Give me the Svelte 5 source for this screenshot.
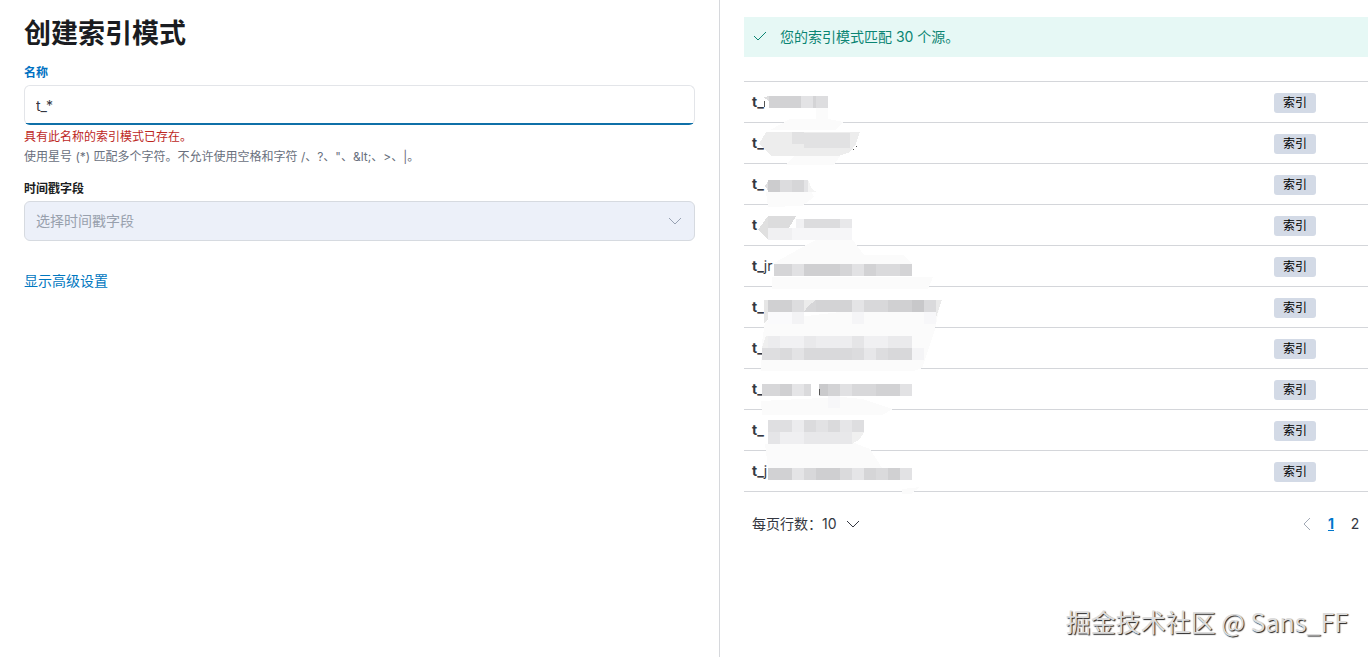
<script lang="ts">
	interface Source {
		match: string;
		rest?: string;
	}

	// x, y, width, height, grey level
	type Block = [number, number, number, number, number];

	const sources: Source[] = [
		{ match: 't_' },
		{ match: 't_' },
		{ match: 't_' },
		{ match: 't' },
		{ match: 't_', rest: 'jr' },
		{ match: 't_' },
		{ match: 't_' },
		{ match: 't_' },
		{ match: 't_' },
		{ match: 't_', rest: 'j' }
	];

	// near-white strokes that run over the row borders
	const smears = [
		'46,38 72,38 72,27 84,27 84,38 99,41 92,49 26,49',
		'50,75 96,75 90,84 42,84',
		'22,111 66,108 70,116 58,125 24,126',
		'66,162 78,156 108,158 120,174 160,174 168,183 28,183',
		'28,196 189,196 184,208 28,208',
		'21,240 197,219 191,249 178,287 170,290 17,290 18,262',
		'17,320 98,316 118,318 149,328 138,334 18,334',
		'21,363 66,363 92,355 126,368 138,387 24,387',
		'158,408 176,406 167,413 158,413'
	];

	const blocks: Block[] = [
		[25, 15, 23, 12, 210],
		[48, 15, 12, 12, 210],
		[57, 15, 12, 12, 227],
		[69, 15, 12, 12, 212],
		[72, 15, 12, 12, 221],
		[24, 99, 12, 12, 204],
		[36, 99, 12, 12, 220],
		[48, 99, 12, 12, 214],
		[60, 99, 4, 12, 228],
		[52, 138, 8, 9, 241],
		[60, 138, 36, 9, 220],
		[96, 138, 12, 9, 232],
		[24, 147, 24, 12, 240],
		[48, 147, 60, 12, 246],
		[30, 183, 18, 12, 213],
		[48, 183, 12, 12, 225],
		[60, 183, 36, 12, 207],
		[96, 183, 12, 12, 213],
		[108, 183, 12, 12, 226],
		[120, 183, 12, 12, 210],
		[132, 183, 24, 12, 218],
		[156, 183, 12, 12, 212],
		[24, 219, 24, 12, 208],
		[48, 219, 12, 12, 221],
		[72, 219, 36, 12, 211],
		[108, 219, 12, 12, 228],
		[120, 219, 24, 12, 216],
		[144, 219, 24, 12, 208],
		[168, 219, 12, 12, 200],
		[180, 219, 12, 12, 218],
		[24, 231, 24, 12, 250],
		[48, 231, 12, 12, 243],
		[108, 231, 12, 12, 245],
		[180, 231, 12, 12, 247],
		[24, 255, 12, 12, 236],
		[36, 255, 24, 12, 241],
		[60, 255, 12, 12, 233],
		[72, 255, 36, 12, 237],
		[108, 255, 12, 12, 229],
		[120, 255, 24, 12, 240],
		[144, 255, 24, 12, 234],
		[18, 267, 18, 12, 222],
		[36, 267, 12, 12, 218],
		[48, 267, 12, 12, 227],
		[60, 267, 48, 12, 217],
		[108, 267, 12, 12, 220],
		[120, 267, 12, 12, 231],
		[132, 267, 12, 12, 221],
		[144, 267, 24, 12, 216],
		[168, 267, 12, 12, 244],
		[18, 303, 18, 12, 215],
		[36, 303, 12, 12, 208],
		[48, 303, 12, 12, 229],
		[60, 303, 7, 12, 218],
		[75, 303, 9, 12, 202],
		[84, 303, 12, 12, 211],
		[96, 303, 12, 12, 225],
		[108, 303, 24, 12, 216],
		[132, 303, 24, 12, 210],
		[156, 303, 12, 12, 226],
		[84, 315, 12, 12, 247],
		[24, 339, 24, 12, 223],
		[48, 339, 12, 12, 236],
		[60, 339, 12, 12, 219],
		[72, 339, 12, 12, 226],
		[84, 339, 12, 12, 218],
		[96, 339, 12, 12, 230],
		[108, 339, 12, 12, 222],
		[24, 351, 12, 12, 229],
		[36, 351, 24, 12, 239],
		[60, 351, 48, 12, 232],
		[24, 387, 24, 12, 209],
		[48, 387, 12, 12, 228],
		[60, 387, 12, 12, 216],
		[72, 387, 24, 12, 207],
		[96, 387, 12, 12, 218],
		[108, 387, 12, 12, 229],
		[120, 387, 12, 12, 213],
		[132, 387, 12, 12, 218],
		[144, 387, 12, 12, 208],
		[156, 387, 12, 12, 226]
	];

	let name = $state('t_*');
</script>

<div class="editor">
	<main class="form-panel">
		<h1>创建索引模式</h1>

		<div class="field">
			<label class="label label--active" for="pattern-name">名称</label>
			<input id="pattern-name" class="control control--focused" type="text" bind:value={name} />
			<p class="hint hint--error">具有此名称的索引模式已存在。</p>
			<p class="hint">{'使用星号 (*) 匹配多个字符。不允许使用空格和字符 /、?、"、&lt;、>、|。'}</p>
		</div>

		<div class="field">
			<label class="label" for="timestamp-field">时间戳字段</label>
			<div class="select-wrap">
				<select id="timestamp-field" class="control control--disabled" disabled>
					<option>选择时间戳字段</option>
				</select>
				<svg class="icon chevron" viewBox="0 0 16 16" aria-hidden="true">
					<path d="M2 5l6 6 6-6" />
				</svg>
			</div>
		</div>

		<a class="advanced" href="#advanced">显示高级设置</a>
	</main>

	<aside class="preview-panel">
		<div class="callout">
			<svg class="icon" viewBox="0 0 16 16" aria-hidden="true"><path d="M2 7l4 4 8-8" /></svg>
			<span>您的索引模式匹配 30 个源。</span>
		</div>

		<div class="sources">
			<table>
				<tbody>
					{#each sources as source}
						<tr>
							<td><strong>{source.match}</strong>{source.rest ?? ''}</td>
							<td class="type"><span class="badge">索引</span></td>
						</tr>
					{/each}
				</tbody>
			</table>

			<svg class="mosaic" viewBox="0 0 204 413" aria-hidden="true">
				{#each smears as points}
					<polygon {points} fill="#fbfbfb" />
				{/each}
				<polygon points="15,63 22,51 116,51 112,63 106,71 94,75 28,75" fill="#ededed" />
				<path d="M48 51h12v12H48zM60 52h46v15H60z" fill="#e2e2e3" />
				<path d="M19 16l8-1v12q-3-4-2-7z" fill="#dededf" />
				<path d="M21 20q-2 3 0 6" class="trace" />
				<path d="M112 65v1M109 68v1" class="trace" />
				<polygon points="21,105 25,99 25,111" fill="#dedee0" />
				<polygon points="64,99 68,108 73,111 64,111" fill="#f4f4f4" />
				<polygon points="14,149 24,135 24,159" fill="#e0e0e0" />
				<polygon points="24,135 52,135 45,147 24,147" fill="#dcdcdd" />
				<polygon points="20,219 24,219 24,238 20,243" fill="#e6e6e6" />
				<polygon points="60,219 72,219 64,225 60,231" fill="#ececec" />
				<polygon points="64,225 72,219 72,231 60,231" fill="#d6d6d8" />
				<polygon points="192,219 198,219 192,236" fill="#eaeaea" />
				<polygon points="22,255 24,255 24,267 18,267" fill="#efefef" />
				<polygon points="67,315 73,304 75,315" fill="#fff" />
				<polygon points="108,351 120,351 116,358 108,363" fill="#f0f0f0" />
				{#each blocks as [x, y, width, height, level]}
					<rect {x} {y} {width} {height} fill="rgb({level} {level} {level + 2})" />
				{/each}
				<path d="M76 308q-2 3 0 6" class="trace" />
			</svg>
		</div>

		<div class="footer">
			<button class="page-size" type="button">
				每页行数：10
				<svg class="icon" viewBox="0 0 16 16" aria-hidden="true">
					<path d="M2 5l6 6 6-6" />
				</svg>
			</button>
			<nav class="pages" aria-label="分页">
				<button type="button" aria-label="上一页" disabled>
					<svg class="icon" viewBox="0 0 16 16" aria-hidden="true">
						<path d="M11 2L5 8l6 6" />
					</svg>
				</button>
				<button class="current" type="button" aria-current="page">1</button>
				<button type="button">2</button>
			</nav>
		</div>
	</aside>

	<div class="watermark">掘金技术社区 @ Sans_FF</div>
</div>

<style>
	:global(body) {
		margin: 0;
		background: #fff;
	}

	.editor {
		position: relative;
		display: grid;
		min-height: 100vh;
		grid-template-columns: minmax(0, 10fr) minmax(0, 9fr);
		overflow: hidden;
		color: #343741;
		font: 14px/20px Inter, 'Noto Sans CJK SC', sans-serif;
	}

	.editor :is(input, select, button) {
		box-sizing: border-box;
		margin: 0;
		font: inherit;
		color: inherit;
	}

	.form-panel {
		border-right: 1px solid #d6d8dc;
		padding: 18px 24px 24px;
	}

	h1 {
		margin: 0 0 14px;
		color: #1a1c21;
		font-size: 27px;
		font-weight: 700;
		line-height: 32px;
	}

	.field {
		margin-bottom: 13px;
	}

	.label {
		display: block;
		margin-bottom: 3px;
		color: #1a1c21;
		font-size: 12px;
		font-weight: 600;
		line-height: 18px;
	}

	.label--active {
		color: #0071c2;
	}

	.control {
		display: block;
		width: 100%;
		height: 40px;
		border: 1px solid #e3e5e9;
		border-radius: 6px;
		outline: none;
		background: #fff;
		padding: 0 11px;
	}

	.control--focused {
		background: linear-gradient(0deg, #0f70a8 2px, #fff 2px) border-box;
		border-bottom-color: transparent;
	}

	.select-wrap {
		display: grid;
		align-items: center;
	}

	.select-wrap > * {
		grid-area: 1 / 1;
	}

	.chevron {
		justify-self: end;
		margin-right: 12px;
		color: #98a2b3;
		pointer-events: none;
	}

	.editor .control--disabled {
		appearance: none;
		border-color: #d6dae0;
		background: #ecf0f9;
		color: #98a0ad;
		opacity: 1;
	}

	.hint {
		margin: 0;
		color: #69707d;
		font-size: 12px;
		line-height: 20px;
	}

	.hint--error {
		margin-top: 2px;
		color: #bd271e;
	}

	.advanced {
		display: inline-block;
		margin-top: 17px;
		color: #0077bf;
		text-decoration: none;
	}

	.preview-panel {
		padding: 17px 0 24px 24px;
	}

	.callout {
		display: flex;
		align-items: center;
		gap: 12px;
		height: 40px;
		margin-bottom: 24px;
		background: #e6f8f5;
		padding: 0 8px;
		color: #0b8573;
	}

	.sources {
		position: relative;
	}

	table {
		width: 100%;
		border-top: 1px solid #d4d6da;
		border-spacing: 0;
		table-layout: fixed;
	}

	td {
		height: 40px;
		border-bottom: 1px solid #d4d6da;
		padding: 0 8px;
	}

	.type {
		width: 86px;
	}

	tr strong {
		font-weight: 700;
	}

	.badge {
		display: inline-block;
		border-radius: 3px;
		background: #d3dae6;
		padding: 0 9px;
		color: #000;
		font-size: 12px;
		line-height: 20px;
		vertical-align: middle;
	}

	.mosaic {
		position: absolute;
		top: 0;
		left: 0;
		width: 204px;
		height: 413px;
		pointer-events: none;
		shape-rendering: crispEdges;
	}

	.trace {
		fill: none;
		stroke: #555;
		stroke-width: 1;
	}

	.icon {
		width: 16px;
		height: 16px;
		flex: none;
		fill: none;
		stroke: currentColor;
		stroke-width: 1;
	}

	.footer {
		display: flex;
		align-items: center;
		justify-content: space-between;
		margin-top: 20px;
	}

	.footer button {
		border: 0;
		background: none;
		padding: 0;
		cursor: pointer;
	}

	.footer .page-size {
		display: flex;
		align-items: center;
		gap: 8px;
		padding-left: 8px;
	}

	.pages {
		display: flex;
		padding-right: 1px;
	}

	.pages button {
		display: grid;
		width: 24px;
		height: 24px;
		place-items: center;
	}

	.pages button:disabled {
		color: #a2a9b5;
	}

	.pages .current {
		color: #0077cc;
		font-weight: 700;
		text-decoration: underline;
	}

	.watermark {
		position: absolute;
		right: 20px;
		bottom: 18px;
		color: #dcdcdc;
		font: 25px/36px 'Noto Sans CJK SC', sans-serif;
		text-shadow: 1px 1px 1px #222;
		pointer-events: none;
	}
</style>
